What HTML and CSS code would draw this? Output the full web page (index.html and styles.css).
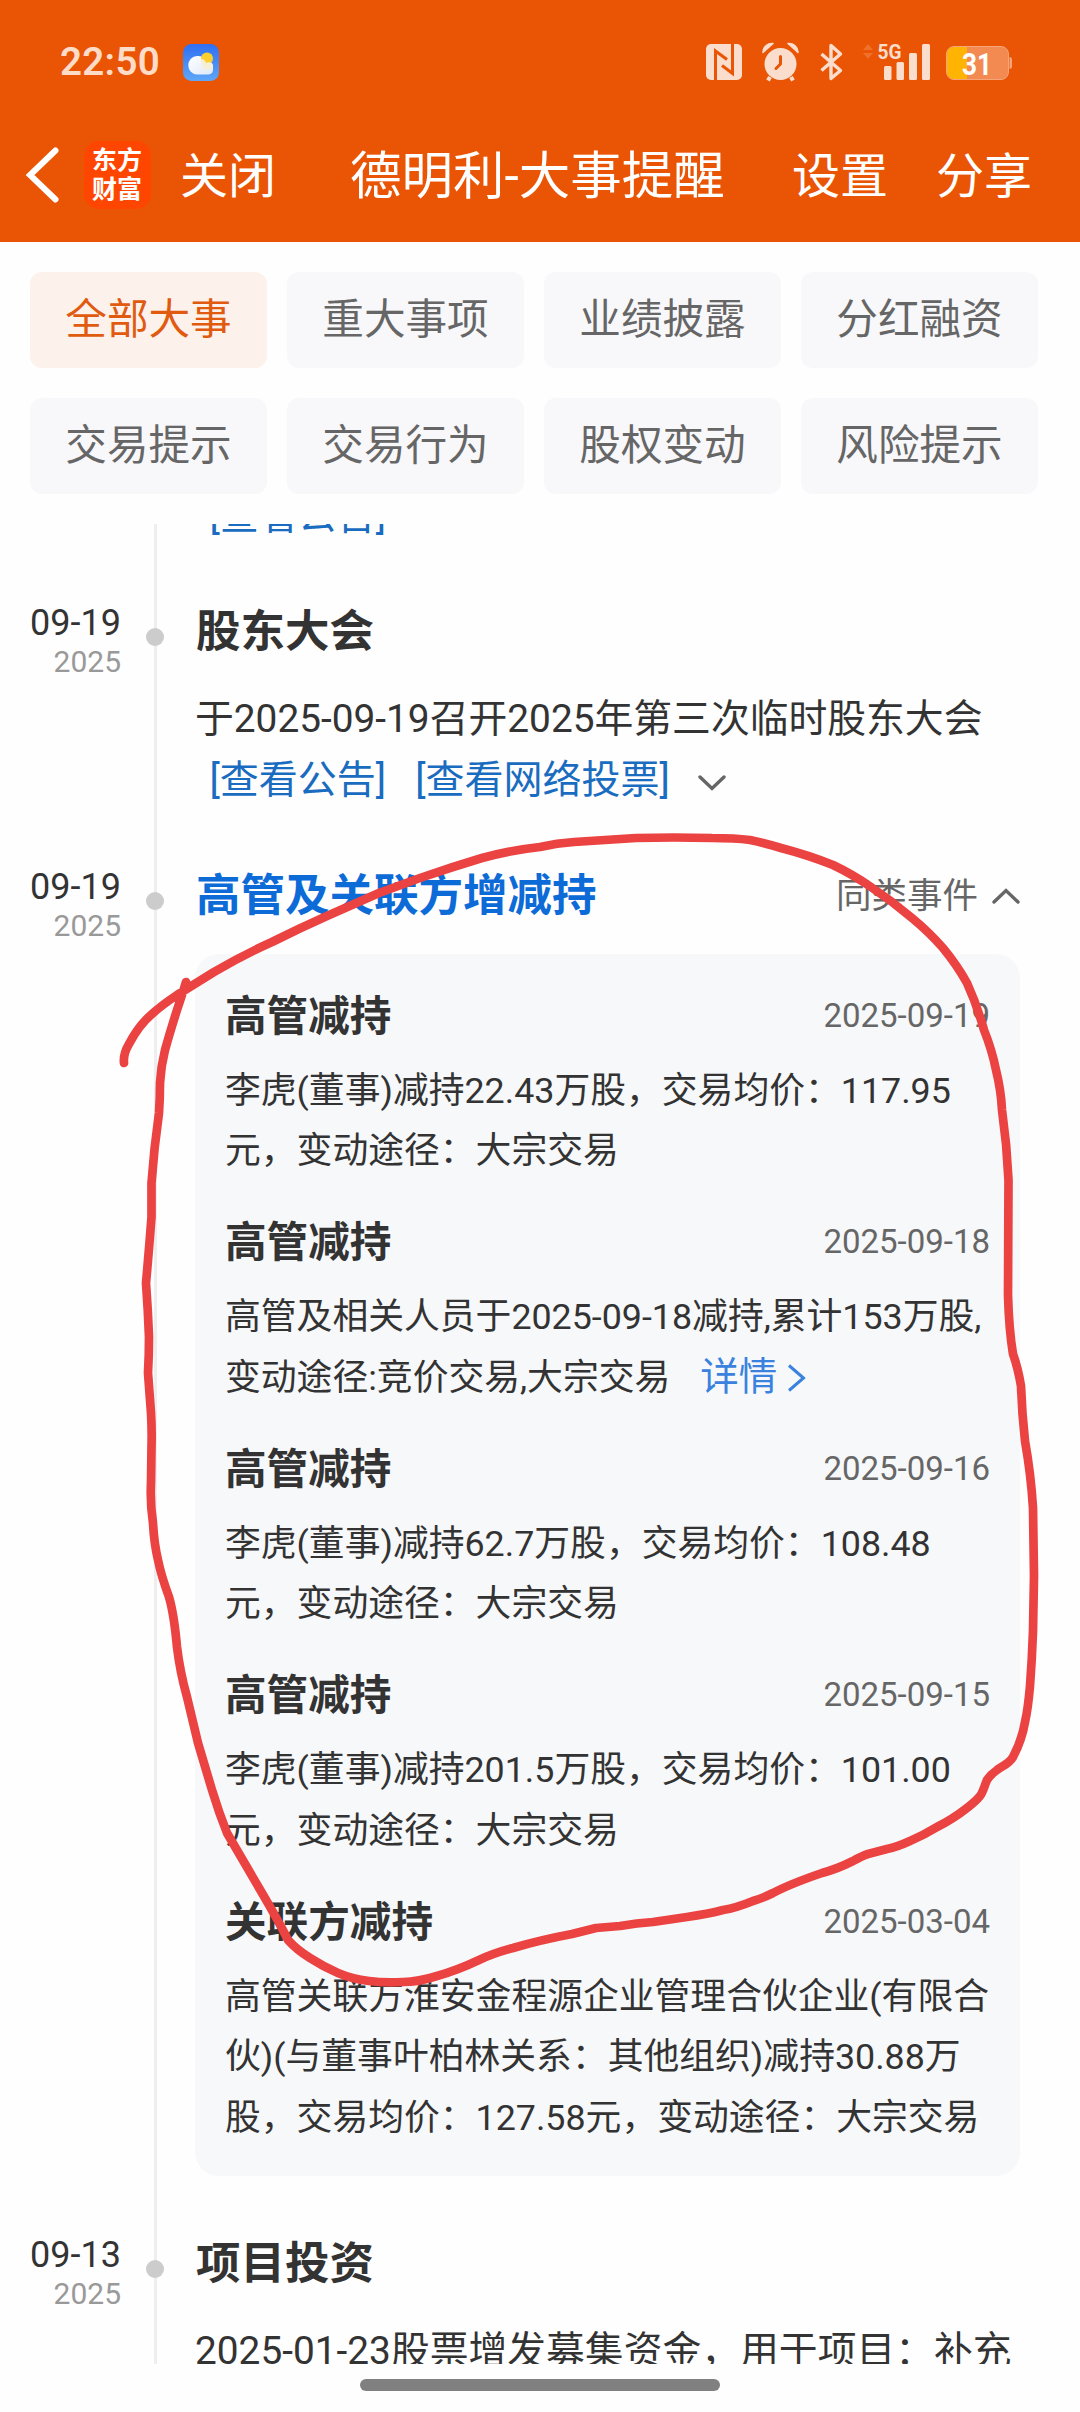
FILE: index.html
```html
<!DOCTYPE html>
<html lang="zh-CN">
<head>
<meta charset="utf-8">
<title>德明利-大事提醒</title>
<link rel="stylesheet" href="styles.css">
</head>
<body>
<div class="screen">
  <header class="header">
    <div class="status">
      <span class="clock">22:50</span>
      <svg class="weather" width="36" height="37" viewBox="0 0 36 37">
        <defs>
          <linearGradient id="sky" x1="0" y1="0" x2="0" y2="1"><stop offset="0" stop-color="#2f6ff2"/><stop offset="1" stop-color="#5ea6f8"/></linearGradient>
          <linearGradient id="cloud" x1="0" y1="0" x2="1" y2="1"><stop offset="0" stop-color="#fff"/><stop offset="1" stop-color="#dfe8f8"/></linearGradient>
        </defs>
        <rect width="36" height="37" rx="8.5" fill="url(#sky)"/>
        <path d="M14 12a8.5 9 0 0 0 0 18.500h11.500a5 5 0 0 0 4.500-5v-4a6 6 0 0 0-7-4.500a9 9 0 0 0-9-5z" fill="url(#cloud)"/>
        <circle cx="24" cy="14.500" r="6" fill="#fccf2e"/>
        <path d="M18 15c3 0 4.500 2 5 4c3-1.500 6-.5 7 2.500v4h-10z" fill="#f6efd8"/>
      </svg>
      <svg class="indicators" width="310" height="44" viewBox="702 40 310 44">
        <g fill="#fbddcd">
          <rect x="706" y="44" width="36" height="36" rx="5"/>
          <g fill="none" stroke="#e95504" stroke-width="3">
            <path d="M715.500 80V51l11.500 8.500M732.500 44v29.500L722 65.500"/>
          </g>
          <circle cx="780.500" cy="64" r="16"/>
          <path d="M763 52a9 9 0 0 1 10-8.500l-10 9zM798 52a9 9 0 0 0-10-8.500l10 9z" stroke="#fbddcd" stroke-width="1.500" stroke-linejoin="round"/>
          <path d="M770 77l-2 3.500M791 77l2 3.500" stroke="#fbddcd" stroke-width="4"/>
          <path d="M780.500 56.500v7.500l-4.500 4.500" stroke="#e95504" stroke-width="3" fill="none" stroke-linecap="round"/>
          <path d="M821.500 54l19 16.500-9.500 8V45.500l9.500 8.500-19 16.500" fill="none" stroke="#fbddcd" stroke-width="3.400" stroke-linejoin="round"/>
          <path d="M863 50l5-6 5 6zM863 53l5 6 5-6z" fill="#f1702a"/>
          <rect x="884" y="66" width="7.500" height="14" rx="1.500"/>
          <rect x="896.500" y="62" width="7.500" height="18" rx="1.500"/>
          <rect x="909" y="53" width="8" height="27" rx="1.500"/>
          <rect x="922" y="44" width="8" height="36" rx="1.500"/>
          <text class="net" x="877.500" y="59" textLength="24" lengthAdjust="spacingAndGlyphs">5G</text>
        </g>
        <rect x="946.500" y="46.500" width="62" height="33" rx="7.500" fill="#f38a52" stroke="#f6a57b"/>
        <path d="M967 47h-13a7 7 0 0 0-7 7v18a7 7 0 0 0 7 7h13z" fill="#ffb302"/>
        <path d="M1009.500 57c1.600 0 2.500 1 2.500 2.500v7c0 1.500-.9 2.500-2.500 2.500z" fill="#f6a57b"/>
        <text class="level" x="962" y="75" textLength="30" lengthAdjust="spacingAndGlyphs">31</text>
      </svg>
    </div>
    <nav class="titlebar">
      <svg class="back" width="38" height="62" viewBox="0 0 38 62"><path d="M33.500 6.500L8 31L33.500 55.500" fill="none" stroke="#fff" stroke-width="6" stroke-linecap="round"/></svg>
      <div class="logo"><span>东方</span><span>财富</span></div>
      <span class="close">关闭</span>
      <h1 class="title">德明利-大事提醒</h1>
      <span class="action settings">设置</span>
      <span class="action">分享</span>
    </nav>
  </header>

  <div class="tabs">
    <div class="tab active">全部大事</div><div class="tab">重大事项</div><div class="tab">业绩披露</div><div class="tab">分红融资</div>
    <div class="tab">交易提示</div><div class="tab">交易行为</div><div class="tab">股权变动</div><div class="tab">风险提示</div>
  </div>

  <main class="viewport">
    <div class="timeline">
      <section class="event">
        <div class="when"></div>
        <div class="rail"></div>
        <div class="content">
          <h2 class="heading"><br></h2>
          <p class="text"><br><a class="link">[查看公告]</a></p>
        </div>
      </section>
      <section class="event">
        <div class="when"><div class="day">09-19</div><div class="year">2025</div></div>
        <div class="rail"><i class="dot"></i></div>
        <div class="content">
          <h2 class="heading">股东大会</h2>
          <p class="text">于2025-09-19召开2025年第三次临时股东大会<br><a class="link">[查看公告]</a><a class="link">[查看网络投票]</a><svg class="more" width="28" height="18" viewBox="0 0 28 18"><path d="M2 3l12 11.500L26 3" fill="none" stroke="#666" stroke-width="3.400" stroke-linecap="round"/></svg></p>
        </div>
      </section>
      <section class="event">
        <div class="when"><div class="day">09-19</div><div class="year">2025</div></div>
        <div class="rail"><i class="dot"></i></div>
        <div class="content">
          <div class="heading-row">
            <h2 class="heading blue">高管及关联方增减持</h2>
            <div class="similar">同类事件<svg width="28" height="18" viewBox="0 0 28 18"><path d="M2 15L14 3.500L26 15" fill="none" stroke="#666" stroke-width="3.400" stroke-linecap="round"/></svg></div>
          </div>
          <div class="panel">
            <article class="record"><div class="record-head"><h3>高管减持</h3><time>2025-09-19</time></div><p>李虎(董事)减持22.43万股，交易均价：117.95<br>元，变动途径：大宗交易</p></article>
            <article class="record"><div class="record-head"><h3>高管减持</h3><time>2025-09-18</time></div><p>高管及相关人员于2025-09-18减持,累计153万股,<br>变动途径:竞价交易,大宗交易<a class="detail">详情<svg width="20" height="32" viewBox="0 0 20 32"><path d="M2 4.500L16.500 17L2 29.500" fill="none" stroke="#3a82de" stroke-width="3"/></svg></a></p></article>
            <article class="record"><div class="record-head"><h3>高管减持</h3><time>2025-09-16</time></div><p>李虎(董事)减持62.7万股，交易均价：108.48<br>元，变动途径：大宗交易</p></article>
            <article class="record"><div class="record-head"><h3>高管减持</h3><time>2025-09-15</time></div><p>李虎(董事)减持201.5万股，交易均价：101.00<br>元，变动途径：大宗交易</p></article>
            <article class="record"><div class="record-head"><h3>关联方减持</h3><time>2025-03-04</time></div><p>高管关联方淮安金程源企业管理合伙企业(有限合<br>伙)(与董事叶柏林关系：其他组织)减持30.88万<br>股，交易均价：127.58元，变动途径：大宗交易</p></article>
          </div>
        </div>
      </section>
      <section class="event">
        <div class="when"><div class="day">09-13</div><div class="year">2025</div></div>
        <div class="rail"><i class="dot"></i></div>
        <div class="content">
          <h2 class="heading">项目投资</h2>
          <p class="text">2025-01-23股票增发募集资金，用于项目：补充</p>
        </div>
      </section>
    </div>
  </main>
  <div class="home"><div class="home-bar"></div></div>

  <svg class="ink" width="1080" height="2412" viewBox="0 0 1080 2412">
    <path d="M124 1063Q123 1054 129 1044Q139 1025 152 1014Q162 1005 177 995L214 972Q243 955 272 942Q300 928 327 916L379 893L420 878Q452 867 482 858Q512 850 540 847Q557 843 574 842L636 838Q674 837 712 838Q735 838 750 840Q765 843 781 848Q808 855 833 865Q852 874 871 887Q892 901 912 918Q929 932 943 948Q957 965 967 983Q977 1005 984 1030Q992 1050 996 1070Q1001 1090 1002 1110Q1007 1145 1008.500 1180L1008 1295Q1009 1330 1013 1354Q1018 1368 1021 1386Q1022 1414 1025 1441Q1031 1475 1033 1508L1034 1576L1033 1631Q1032 1660 1030 1686Q1028 1709 1025 1722Q1022 1740 1013 1757C1009 1764 1002 1766 997 1770Q991 1774 987 1780C984 1787 983 1792 980 1796Q976 1801 967 1808Q953 1819 937 1827Q924 1835 910 1841Q897 1847 887 1849L868 1854Q862 1856 853 1861Q837 1869 822 1873Q790 1884 773 1893Q763 1898 753 1901Q736 1908 723 1910Q708 1914 687 1917L653 1922Q637 1923 620 1926L596 1928L572 1934Q540 1940 513 1948Q494 1953 479 1960Q458 1970 437 1976Q418 1982 403 1982Q384 1983 369 1981Q352 1979 338 1973Q324 1967 310 1958Q297 1950 288 1940Q278 1920 262 1893L227 1833Q219 1813 212 1790L198 1743L187 1697Q180 1672 177 1647Q174 1614 169 1597Q161 1575 158 1560Q154 1543 153 1523Q150 1503 151 1483L151.500 1447Q152 1430 151 1413L148 1373Q149 1355 149 1337Q148 1310 146 1283Q149 1250 151.500 1217V1183Q154 1148 159 1113Q160 1098 160 1083Q161 1066 165 1050Q170 1032 177 1010Q183 992 186 982" fill="none" stroke="#eb4242" stroke-width="8.700" stroke-linecap="round" stroke-linejoin="round"/>
  </svg>
</div>
</body>
</html>
```
FILE: styles.css
```css
* { box-sizing: border-box; margin: 0; padding: 0; }

body {
  background: #fff;
  color: #333;
  font-family: Roboto, "Noto Sans CJK SC", sans-serif;
  text-spacing-trim: space-all;
}

h1, h2, h3 { font-weight: inherit; }

.screen {
  position: relative;
  display: flex;
  flex-direction: column;
  width: 1080px;
  height: 2412px;
  overflow: hidden;
  white-space: nowrap;
  background: #fefefe;
}

.header { height: 242px; background: #e95504; color: #fff; }

.status { display: flex; align-items: center; height: 124px; padding: 0 68px 0 60px; }
.clock { width: 123px; font-size: 38.5px; font-weight: 600; line-height: 44px; letter-spacing: .3px; color: #fedcc8; }
.indicators { margin-left: auto; }
.net { font: 700 21px Roboto, sans-serif; }
.level { font: 700 32px Roboto, sans-serif; fill: #fff; }

.titlebar { display: flex; align-items: center; height: 102px; padding-left: 22px; }
.logo {
  display: flex;
  flex-direction: column;
  justify-content: center;
  width: 67px;
  height: 68px;
  margin-left: 24px;
  padding-left: 8px;
  border-radius: 15px;
  background: #ff4600;
  font-size: 25px;
  font-weight: 700;
  line-height: 29px;
}
.close, .title, .action { line-height: 60px; padding-top: 3px; }
.close { width: 170px; margin-left: 29px; font-size: 48px; }
.title { width: 442px; font-size: 51.5px; }
.action { font-size: 48px; }
.settings { margin-right: 48px; }

.tabs {
  display: grid;
  grid-template-columns: repeat(4, 237px);
  grid-auto-rows: 96px;
  gap: 30px 20px;
  padding: 30px 30px 0;
}
.tab {
  border-radius: 12px;
  background: #f8f8fa;
  color: #666;
  font-size: 41.6px;
  line-height: 95px;
  text-align: center;
}
.tab.active { background: #fdf2eb; color: #e05a10; }

.viewport { height: 1840px; margin-top: 30px; overflow: hidden; }
.timeline { margin-top: -186px; }

.event { display: flex; }
.when { width: 154px; padding-right: 33px; text-align: right; }
.day { font-size: 36px; line-height: 42px; }
.year { font-size: 30px; line-height: 36px; color: #999; }
.rail { width: 3px; margin-right: 38px; background: #eee; }
.dot {
  display: block;
  width: 18px;
  height: 18px;
  margin: 26px 0 0 -8px;
  border-radius: 50%;
  background: #ccc;
}
.content { width: 825px; padding-bottom: 56px; }
.heading { padding-left: 1px; font-size: 44.5px; font-weight: 700; line-height: 60px; }
.heading.blue { color: #0d6bd7; }
.text { padding: 26px 0 0; font-size: 38.8px; line-height: 61px; }
.link { margin: 0 14.5px; font-size: 39px; line-height: 1; color: #1a6cc0; }
.more { margin-left: 14px; vertical-align: 1px; }

.heading-row { display: flex; justify-content: space-between; }
.similar { display: flex; align-items: center; gap: 14px; height: 60px; font-size: 35.5px; line-height: 60px; color: #666; }

.panel {
  display: flex;
  flex-direction: column;
  gap: 34.9px;
  height: 1222px;
  margin: 28px 0 2px;
  padding: 35px 30px 0;
  border-radius: 24px;
  background: #f7f8fa;
}
.record-head { display: flex; justify-content: space-between; height: 56px; margin-bottom: 15px; }
.record h3 { font-size: 41.6px; font-weight: 700; line-height: 56px; }
.record time { font-size: 33px; line-height: 53px; color: #666; }
.record p { padding-top: 1px; margin-bottom: -1px; font-size: 35.8px; line-height: 60.3px; }
.detail { margin-left: 30px; font-size: 38.5px; line-height: 1; color: #3a82de; }
.detail svg { margin-left: 10px; vertical-align: -3px; }

.home { display: flex; justify-content: center; padding-top: 15px; }
.home-bar { width: 360px; height: 12px; border-radius: 6px; background: #808080; }

.ink { position: absolute; inset: 0; pointer-events: none; }
```
